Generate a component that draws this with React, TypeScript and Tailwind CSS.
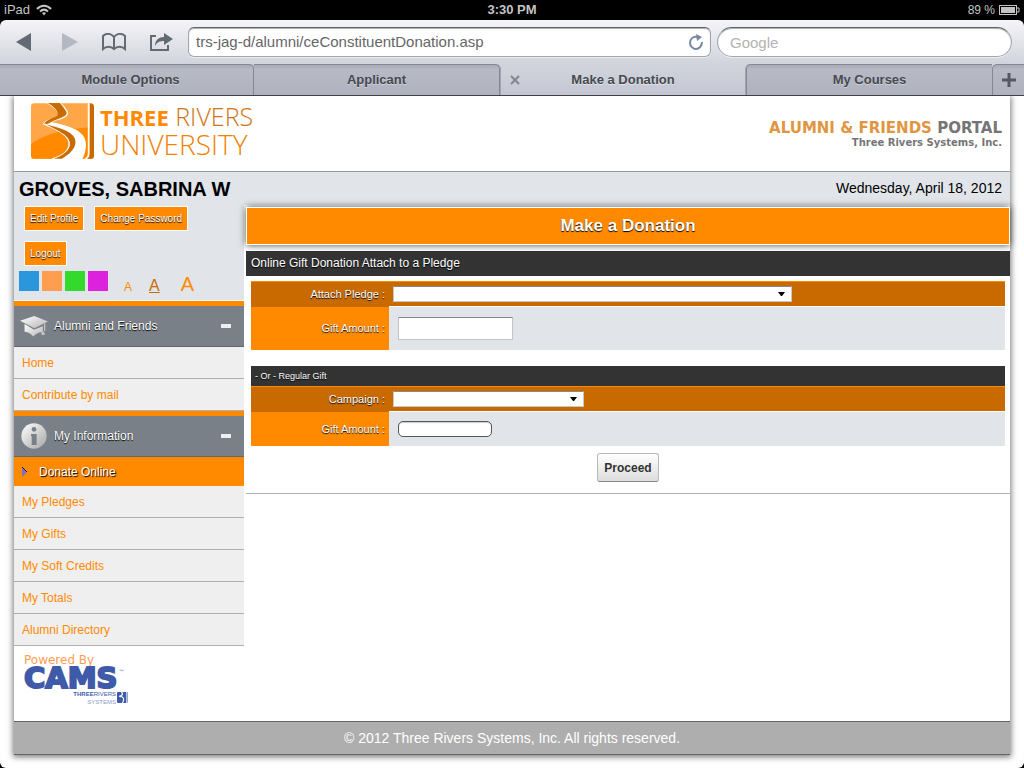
import { useState } from 'react';

const accountButtons = ['Edit Profile', 'Change Password', 'Logout'];

const themes = [
  { name: 'Blue theme', className: 'bg-[#2a97dc]' },
  { name: 'Orange theme', className: 'bg-[#ff9d50]' },
  { name: 'Green theme', className: 'bg-[#33d92b]' },
  { name: 'Purple theme', className: 'bg-[#dc22dc]' },
];

const tabs = ['Module Options', 'Applicant', 'Make a Donation', 'My Courses'];

const menus = [
  {
    title: 'Alumni and Friends',
    icon: CapIcon,
    items: ['Home', 'Contribute by mail'],
  },
  {
    title: 'My Information',
    icon: InfoIcon,
    items: ['Donate Online', 'My Pledges', 'My Gifts', 'My Soft Credits', 'My Totals', 'Alumni Directory'],
  },
];

function CapIcon() {
  return (
    <svg viewBox="0 0 86 64" className="w-7 h-[21px]" aria-hidden="true">
      <defs>
        <linearGradient id="cap" x1="0" y1="0" x2="1" y2="1">
          <stop offset="0" stopColor="#ffffff" />
          <stop offset="1" stopColor="#b4b4b4" />
        </linearGradient>
      </defs>
      <path d="M0 14 L44 0 L86 17 L44 37 Z" fill="url(#cap)" />
      <path d="M14 24 L43 42 L70 31 V46 L76 52 V58 H66 V50 C56 50 48 56 41 63 C34 54 26 49 14 48 Z" fill="url(#cap)" />
      <path d="M76 23 V46" stroke="#d8d8d8" strokeWidth="3" />
    </svg>
  );
}

function InfoIcon() {
  return (
    <svg viewBox="0 0 78 78" className="w-[26px] h-[26px] ml-px" aria-hidden="true">
      <defs>
        <linearGradient id="info" x1="0" y1="0" x2="1" y2="1">
          <stop offset="0" stopColor="#ffffff" />
          <stop offset="1" stopColor="#a6a6a6" />
        </linearGradient>
      </defs>
      <circle cx="39" cy="39" r="38" fill="url(#info)" />
      <circle cx="39" cy="19" r="7" fill="#7a8087" />
      <path d="M30 33 H47 V66 H32 V40 H30 Z" fill="#7a8087" />
    </svg>
  );
}

function RiverLogo() {
  return (
    <svg viewBox="0 0 188 166" className="w-[63px] h-14 shrink-0" aria-hidden="true">
      <rect width="188" height="166" rx="10" fill="#ffa748" />
      <path d="M0 122 C40 92 110 74 188 72 V156 Q188 166 178 166 H10 Q0 166 0 156 Z" fill="#ff8a00" />
      <path
        d="M52 0 H86 C98 6 100 16 107 24 C112 34 104 40 88 46 C70 51 62 54 60 58 C84 64 122 70 144 88 C166 104 168 128 152 166 H64 C92 158 114 142 114 120 C112 94 76 78 38 62 C44 50 68 48 82 40 C86 28 70 12 52 0 Z"
        fill="#ffffff"
        stroke="#ffffff"
        strokeWidth="4"
      />
      <path
        d="M54 0 H84 C94 6 96 16 104 26 C108 34 98 39 84 44 C68 50 58 54 50 60 L42 60 C50 49 68 46 80 38 C86 26 70 10 54 0 Z"
        fill="#c96a00"
        stroke="#c96a00"
        strokeWidth="3"
      />
      <path
        d="M44 62 C72 72 106 76 124 96 C146 120 124 148 92 166 H68 C96 156 118 140 116 118 C112 92 74 80 44 62 Z"
        fill="#c96a00"
      />
      <path d="M172 0 V150 C172 160 168 164 162 166" fill="none" stroke="#ffffff" strokeWidth="5" />
      <path d="M176 0 Q188 2 188 12 V156 Q188 166 176 166 H168 C175 162 176 158 176 150 Z" fill="#c96a00" />
    </svg>
  );
}

function WifiIcon() {
  return (
    <svg viewBox="0 0 16 12" className="w-4 h-3" fill="none" stroke="#c4c4c4" strokeWidth="2" aria-hidden="true">
      <path d="M1 5 C5 0.500 11 0.500 15 5" />
      <path d="M4 7.500 C6.500 5 9.500 5 12 7.500" />
      <path d="M6 9 C7 8 9 8 10 9 L8 11.500 Z" fill="#c4c4c4" stroke="none" />
    </svg>
  );
}

function StatusBar() {
  return (
    <div className="h-5 px-1 grid grid-cols-3 items-center bg-black text-[#c4c4c4] text-[13px] leading-5 font-bold">
      <div className="flex items-center gap-[6px] font-normal">
        iPad <WifiIcon />
      </div>
      <div className="text-center">3:30 PM</div>
      <div className="flex items-center justify-end gap-1 text-[12px] font-normal">
        89 %
        <svg viewBox="0 0 21 10" className="w-[21px] h-[10px]" aria-hidden="true">
          <rect x="0.500" y="0.500" width="17" height="9" fill="none" stroke="#c4c4c4" />
          <rect x="2" y="2" width="14" height="6" fill="#c4c4c4" />
          <path d="M18 3 H20 V7 H18" fill="none" stroke="#c4c4c4" />
        </svg>
      </div>
    </div>
  );
}

function Toolbar() {
  return (
    <div className="h-11 flex items-center pl-4 pr-3 text-[#646a73]">
      <button aria-label="Back" className="mr-[30px]">
        <svg viewBox="0 0 16 18" className="w-4 h-[18px]" fill="currentColor">
          <path d="M0 9 L15 0 V18 Z" />
        </svg>
      </button>
      <button aria-label="Forward" disabled className="mr-[23px] text-[#b4b8c1]">
        <svg viewBox="0 0 16 18" className="w-4 h-[18px]" fill="currentColor">
          <path d="M16 9 L0 0 V18 Z" />
        </svg>
      </button>
      <button aria-label="Bookmarks" className="mr-[22px]">
        <svg viewBox="0 0 26 18" className="w-[26px] h-[18px]" fill="none" stroke="currentColor" strokeWidth="2">
          <path d="M13 4 C10 0 5 0 2 3 V16 C5 13 10 13 13 16 C16 13 21 13 24 16 V3 C21 0 16 0 13 4 V16" />
        </svg>
      </button>
      <button aria-label="Share" className="mr-[15px]">
        <svg viewBox="0 0 24 19" className="w-6 h-[19px]" fill="none" stroke="currentColor" strokeWidth="2">
          <path d="M7 3 H2 V17 H19 V12" />
          <path d="M6 13 C6 7 10 4 15 4 V0 L24 6 L15 12 V8 C11 8 8 9 6 13 Z" fill="currentColor" stroke="none" />
        </svg>
      </button>
      <div className="grow h-[30px] flex items-center rounded-[6px] border border-[#a2a5ad] border-t-[#5f6269] bg-white px-[7px] shadow-[inset_0_1px_1px_#a9abb0,0_1px_0_#eeeef2]">
        <input
          aria-label="Address"
          defaultValue="trs-jag-d/alumni/ceConstituentDonation.asp"
          className="grow min-w-0 text-[15px] text-[#666666] outline-none"
        />
        <button aria-label="Reload" className="text-[#7589a5]">
          <svg viewBox="0 0 14 16" className="w-[14px] h-4" fill="none" stroke="currentColor" strokeWidth="2">
            <path d="M8 3 C4 2 1 5 1 9 C1 12 4 15 7 15 C10 15 13 12 13 8" />
            <path d="M7 0 L13 3 L8 7 Z" fill="currentColor" stroke="none" />
          </svg>
        </button>
      </div>
      <input
        aria-label="Search"
        placeholder="Google"
        className="ml-[6px] w-[295px] h-[30px] rounded-full border border-[#a2a5ad] border-t-[#5f6269] bg-white px-3 text-[15px] placeholder:text-[#b3b3b3] outline-none shadow-[inset_0_1px_1px_#a9abb0,0_1px_0_#eeeef2]"
      />
    </div>
  );
}

function TabBar() {
  const active = 2;

  return (
    <div className="h-8 grid grid-cols-[8px_repeat(4,minmax(0,1fr))_32px] border-b border-[#3e4046] text-[13px] font-bold text-[#454950]">
      <div className="border-t border-[#858792] bg-linear-to-b from-[#a8aab5] via-[#b7b9c4] via-15% to-[#b0b2bd]" />
      {tabs.map((tab, index) => {
        if (index === active) {
          return (
            <div key={tab} className="flex items-center px-[10px]">
              <button aria-label="Close tab">
                <svg viewBox="0 0 10 10" className="w-[10px] h-[10px]" stroke="#82858e" strokeWidth="2">
                  <path d="M1 1 L9 9 M9 1 L1 9" />
                </svg>
              </button>
              <button className="grow pr-[10px] text-shadow-[0_1px_0_#e4e5eb]">{tab}</button>
            </div>
          );
        }
        return (
          <button
            key={tab}
            className={`border-t border-[#858792] bg-linear-to-b from-[#a8aab5] via-[#b7b9c4] via-15% to-[#b0b2bd] text-shadow-[0_1px_0_#cfd1d9] ${
              index < active
                ? 'rounded-tr-[5px] border-r shadow-[1px_0_0_#a2a4af]'
                : 'rounded-tl-[5px] border-l shadow-[-1px_0_0_#a2a4af]'
            }`}
          >
            {tab}
          </button>
        );
      })}
      <button
        aria-label="New tab"
        className="flex items-center justify-center border-t border-l rounded-tl-[5px] border-[#858792] bg-linear-to-b from-[#a8aab5] via-[#b7b9c4] via-15% to-[#b0b2bd]"
      >
        <svg viewBox="0 0 14 14" className="w-[14px] h-[14px]" stroke="#555962" strokeWidth="3">
          <path d="M7 0 V14 M0 7 H14" />
        </svg>
      </button>
    </div>
  );
}

function PageHeader() {
  return (
    <header className="h-[76px] flex items-start justify-between pl-[17px] pr-2 pt-[7px] border-b border-[#999999] bg-white">
      <div className="flex gap-[6px]">
        <RiverLogo />
        <div className="font-['Open_Sans',sans-serif] font-light">
          <div className="text-[25px] leading-[27px] text-[#cf7411]">
            <span className="text-[22px] font-bold text-[#ff8a00]">THREE</span> RIVERS
          </div>
          <div className="text-[28px] leading-[27px] text-[#f08306]">UNIVERSITY</div>
        </div>
      </div>
      <div className="pt-4 text-right font-bold font-['DejaVu_Sans',sans-serif] text-[#757575]">
        <div className="text-[15px] leading-[18px]">
          <span className="text-[#e0963f]">ALUMNI &amp; FRIENDS</span> PORTAL
        </div>
        <div className="text-[10px] leading-3">Three Rivers Systems, Inc.</div>
      </div>
    </header>
  );
}

function Preferences() {
  return (
    <div className="h-[96px] border-b border-white bg-[#e1e4e9]">
      <div className="flex flex-wrap gap-[10px] pl-[10px] pr-8 pt-px">
        {accountButtons.map((label) => (
          <button
            key={label}
            className="h-[25px] px-[5px] border border-white bg-[#ff8a00] text-[10px] text-white text-shadow-[0_1px_1px_#000000]"
          >
            {label}
          </button>
        ))}
      </div>
      <div className="flex items-baseline pl-[5px] pt-[5px]">
        <div className="flex gap-[3px] mr-4">
          {themes.map((theme) => (
            <button key={theme.name} aria-label={theme.name} className={`w-5 h-5 ${theme.className}`} />
          ))}
        </div>
        <div className="flex items-baseline gap-[17px] text-[#ff8a00] leading-5">
          <button aria-label="Small text" className="text-[12px]">A</button>
          <button aria-label="Medium text" className="text-[16px] text-[#c96a00] underline">A</button>
          <button aria-label="Large text" className="ml-1 text-[20px]">A</button>
        </div>
      </div>
    </div>
  );
}

function Menu({ menu }: { menu: (typeof menus)[number] }) {
  const [open, setOpen] = useState(true);
  const Icon = menu.icon;

  return (
    <section>
      <button
        aria-expanded={open}
        onClick={() => setOpen(!open)}
        className="w-full h-[46px] flex items-center pl-[6px] pr-[13px] border-t-[5px] border-t-[#ff8a00] border-b border-b-[#63676c] bg-[#7a8087] text-[12px] text-white text-shadow-[0_1px_1px_#000000]"
      >
        <span className="w-[34px] flex">
          <Icon />
        </span>
        <span className="grow text-left">{menu.title}</span>
        <span className="w-[10px] h-1 bg-[#eceef3]" />
      </button>
      {open && (
        <ul className="text-[12px]">
          {menu.items.map((item) =>
            item === 'Donate Online' ? (
              <li key={item}>
                <a
                  href="#donate"
                  aria-current="page"
                  className="h-[29px] flex items-center gap-3 pl-2 bg-[#ff8a00] text-white text-shadow-[1px_1px_1px_#000000]"
                >
                  <svg viewBox="0 0 5 10" className="w-[5px] h-[10px]" aria-hidden="true">
                    <path d="M0 0 L5 5 L0 10 Z" fill="#7d72c0" />
                    <path d="M0 0 L5 5" stroke="#14106a" />
                  </svg>
                  {item}
                </a>
              </li>
            ) : (
              <li key={item}>
                <a href="#menu" className="h-8 flex items-center pl-2 border-b border-[#b0b0b0] bg-[#efefef] text-[#ff8a00]">
                  {item}
                </a>
              </li>
            )
          )}
        </ul>
      )}
    </section>
  );
}

function PoweredBy() {
  return (
    <div className="h-[75px] pl-[10px] pt-[6px] font-['DejaVu_Sans',sans-serif] text-[#3f5aa9]">
      <div className="text-[12px] leading-4 text-[#ff9d50]">Powered By</div>
      <div className="flex items-start">
        <span className="text-[29px] leading-5 font-bold [-webkit-text-stroke:2px_#3f5aa9]">CAMS</span>
        <span className="pl-px text-[6px] leading-[8px]">™</span>
      </div>
      <div className="w-[104px] flex justify-end gap-px pt-[2px]">
        <div className="text-right text-[6px] leading-[8px] font-['Liberation_Sans',sans-serif]">
          <div>
            <b>THREE</b>RIVERS
          </div>
          <div className="text-[#8d9ccb]">SYSTEMS</div>
        </div>
        <svg viewBox="0 0 10 10" className="w-[11px] h-[11px] mt-[2px]" aria-hidden="true">
          <rect width="10" height="10" rx="1" fill="#3f5aa9" />
          <path d="M4 0 C6 2 5 3 2 4 C6 4 7 6 5 10 M9 0 V10" fill="none" stroke="#ffffff" strokeWidth="1" />
        </svg>
      </div>
    </div>
  );
}

function SelectRow({ id, label, width }: { id: string; label: string; width: string }) {
  return (
    <div className="h-[26px] flex border-t border-[#ff8a00] bg-[#c96a00]">
      <label
        htmlFor={id}
        className="w-[138px] pr-1 text-right text-[11px] leading-[25px] text-white text-shadow-[0_1px_1px_#000000]"
      >
        {label} :
      </label>
      <div className="grow flex items-center pl-1 border-b border-white">
        <div className={`relative h-4 ${width}`}>
          <select
            id={id}
            className="block w-full h-full appearance-none border border-[#c8c8c8] border-t-[#888888] bg-white text-[11px] outline-none"
          />
          <svg viewBox="0 0 7 4" className="absolute right-[7px] top-[6px] w-[7px] h-1 pointer-events-none" aria-hidden="true">
            <path d="M0 0 H7 L4 4 H3 Z" fill="#000000" />
          </svg>
        </div>
      </div>
    </div>
  );
}

function AmountRow({ id, height, inputClass }: { id: string; height: string; inputClass: string }) {
  return (
    <div className={`flex bg-[#e1e4e9] ${height}`}>
      <label
        htmlFor={id}
        className="w-[138px] pr-1 flex items-center justify-end bg-[#ff8a00] text-[11px] text-white text-shadow-[0_1px_1px_#000000]"
      >
        Gift Amount :
      </label>
      <div className="flex items-center pl-[9px]">
        <input id={id} type="text" className={inputClass} />
      </div>
    </div>
  );
}

function DonationForm() {
  return (
    <form className="border-b border-[#b0b0b0] pb-[11px]" onSubmit={(e) => e.preventDefault()}>
      <h2 className="mt-[6px] h-[25px] pl-[5px] bg-[#333333] text-[12px] leading-[25px] text-white text-shadow-[0_1px_1px_#000000]">
        Online Gift Donation Attach to a Pledge
      </h2>
      <div className="px-[5px] pt-[5px]">
        <SelectRow id="pledge" label="Attach Pledge" width="w-[399px]" />
        <AmountRow
          id="pledge-amount"
          height="h-[43px]"
          inputClass="w-[115px] h-[23px] px-1 border border-[#c4c4c4] border-t-[#888888] bg-white text-[11px] outline-none"
        />
        <h3 className="mt-4 h-5 pl-1 bg-[#333333] text-[9px] leading-5 text-white text-shadow-[0_1px_1px_#000000]">
          - Or - Regular Gift
        </h3>
        <SelectRow id="campaign" label="Campaign" width="w-[191px]" />
        <AmountRow
          id="campaign-amount"
          height="h-[34px]"
          inputClass="w-[94px] h-4 px-1 rounded-[5px] border border-[#555555] bg-white text-[11px] outline-none shadow-[inset_0_1px_1px_#cccccc]"
        />
      </div>
      <div className="flex justify-center pt-[7px]">
        <button className="h-[29px] px-[6px] rounded-[3px] border border-[#b8b8b8] border-b-[#888888] bg-linear-to-b from-[#ffffff] to-[#dddddd] text-[12px] font-bold text-[#333333]">
          Proceed
        </button>
      </div>
    </form>
  );
}

export default function App() {
  return (
    <div className="min-h-screen flex flex-col bg-black font-['Liberation_Sans',Arial,sans-serif]">
      <StatusBar />
      <div className="rounded-t-[6px] bg-linear-to-b from-[#f5f5f8] via-[#d3d5de] via-55% to-[#c3c5d1]">
        <Toolbar />
        <TabBar />
      </div>

      <div className="grow flex flex-col px-[14px] pb-[13px] rounded-b-[6px] bg-white overflow-hidden">
        <div className="grow flex flex-col bg-white shadow-[0_1px_6px_1px_#777777]">
          <PageHeader />
          <div className="h-[33px] flex items-center justify-between pl-[5px] pr-2 bg-[#e1e4e9]">
            <div className="text-[20px] font-bold text-black">GROVES, SABRINA W</div>
            <div className="text-[14px] text-black">Wednesday, April 18, 2012</div>
          </div>

          <div className="grow flex gap-[2px]">
            <aside className="w-[230px] shrink-0">
              <Preferences />
              {menus.map((menu) => (
                <Menu key={menu.title} menu={menu} />
              ))}
              <PoweredBy />
            </aside>
            <main className="grow pt-[2px]">
              <h1 className="h-[38px] border border-white bg-[#ff8a00] text-center text-[17px] leading-9 font-bold text-white text-shadow-[0_1px_1px_#000000] shadow-[0_0_7px_#444444]">
                Make a Donation
              </h1>
              <DonationForm />
            </main>
          </div>

          <footer className="h-[34px] border-y border-[#666666] bg-[#aeaeae] text-center text-[14px] leading-8 text-white">
            © 2012 Three Rivers Systems, Inc. All rights reserved.
          </footer>
        </div>
      </div>
    </div>
  );
}
